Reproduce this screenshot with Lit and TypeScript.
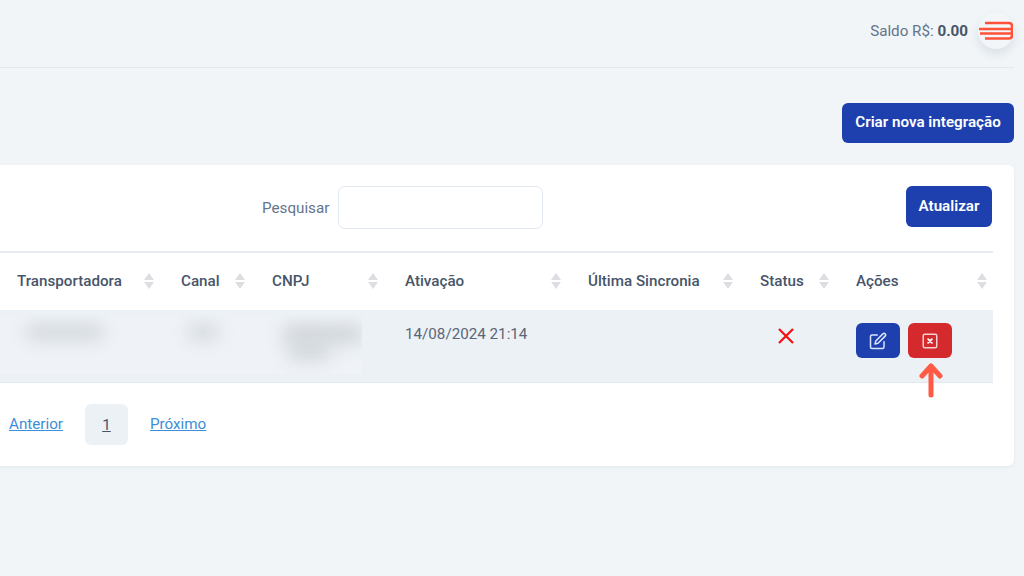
import { LitElement, html, css } from "lit";
import { customElement } from "lit/decorators.js";

const columns = [
  { label: "Transportadora", width: 165 },
  { label: "Canal", width: 91 },
  { label: "CNPJ", width: 133 },
  { label: "Ativação", width: 183 },
  { label: "Última Sincronia", width: 172 },
  { label: "Status", width: 96 },
  { label: "Ações", width: 153 },
];

const sortIcon = html`<svg class="sort" width="10" height="16" viewBox="0 0 10 16">
  <path d="M5 0 L10 7 H0 Z M0 9 H10 L5 16 Z" fill="#dcdee1"></path>
</svg>`;

@customElement("app-root")
export class AppRoot extends LitElement {
  static styles = css`
    :host {
      display: block;
      width: 1024px;
      height: 576px;
      overflow: hidden;
      background: #f1f5f8;
      font-family: Roboto, "Liberation Sans", sans-serif;
      color: #475569;
      font-size: 15.2px;
    }
    .topbar {
      height: 67px;
      margin-right: 10px;
      border-bottom: 1px solid #e2e8f0;
      display: flex;
      align-items: flex-start;
      justify-content: flex-end;
      gap: 10px;
    }
    .saldo {
      margin-top: 22px;
      line-height: 18px;
      color: #64748b;
    }
    .saldo b {
      color: #475569;
      font-weight: 700;
    }
    .menu {
      position: relative;
      width: 36px;
      height: 36px;
      margin-top: 13px;
      border-radius: 50%;
      background: #f3f6f9;
      box-shadow: 0 5px 10px rgba(100, 116, 139, 0.16);
    }
    .burger {
      position: absolute;
      left: -1px;
      top: 8px;
    }
    .actions-row {
      display: flex;
      justify-content: flex-end;
      padding: 35px 10px 22px 0;
    }
    .btn {
      background: #1e40af;
      color: #fff;
      font: 600 15.2px/1 Roboto, sans-serif;
      border-radius: 6px;
      display: flex;
      align-items: center;
      justify-content: center;
      box-sizing: border-box;
    }
    .create {
      width: 172px;
      height: 40px;
    }
    .card {
      height: 301px;
      margin-right: 10px;
      background: #fff;
      border-radius: 0 6px 6px 0;
      box-shadow: 0 1px 3px rgba(100, 116, 139, 0.1);
      box-sizing: border-box;
      padding: 21px 21px 0 0;
    }
    .tools {
      display: flex;
      align-items: center;
      height: 43px;
    }
    .search-label {
      margin-left: 262px;
      margin-right: 9px;
      color: #64748b;
    }
    .search {
      width: 205px;
      height: 43px;
      box-sizing: border-box;
      border: 1px solid #e2e8f0;
      border-radius: 7px;
      background: #fff;
    }
    .update {
      margin-left: auto;
      margin-right: 1px;
      margin-bottom: 2px;
      width: 86px;
      height: 41px;
    }
    .table {
      margin-top: 22px;
      border-top: 2px solid #e8ecf0;
    }
    .row {
      display: flex;
    }
    .th {
      flex: none;
      height: 57px;
      box-sizing: border-box;
      padding: 0 11px 1px 16px;
      display: flex;
      align-items: center;
      justify-content: space-between;
      font-weight: 500;
      color: #475569;
    }
    .th.first {
      padding-left: 17px;
    }
    .th.last {
      padding-right: 6px;
    }
    .body {
      height: 72px;
      background: #ecf1f6;
      border-bottom: 1px solid #e2e8f0;
      box-sizing: content-box;
      position: relative;
    }
    .td {
      flex: none;
      box-sizing: border-box;
      padding: 15px 16px 0;
      line-height: 18px;
      color: #5b6678;
    }
    .censor {
      position: absolute;
      left: 0;
      top: 5px;
      width: 362px;
      height: 59px;
      overflow: hidden;
      background: #eff3f7;
    }
    .smudge {
      position: absolute;
      background: #ced3d7;
      filter: blur(9px);
      border-radius: 6px;
    }
    .status {
      flex: none;
      box-sizing: border-box;
      padding: 18px 0 0 34px;
    }
    .row-btns {
      display: flex;
      gap: 8px;
      padding-top: 13px;
      position: relative;
    }
    .icon-btn {
      width: 44px;
      height: 35px;
      border-radius: 6px;
      display: flex;
      align-items: center;
      justify-content: center;
      background: #1e40af;
    }
    .icon-btn.red {
      background: #d42a2e;
    }
    .arrow {
      position: absolute;
      left: 79px;
      top: 52px;
    }
    .pager {
      display: flex;
      align-items: center;
      height: 41px;
      margin-top: 21px;
      padding-left: 9px;
    }
    .pager a {
      color: #3b8ed8;
      text-decoration: underline;
      margin-bottom: 2px;
    }
    .page {
      width: 43px;
      height: 41px;
      margin: 0 22px;
      background: #ecf1f6;
      border-radius: 6px;
      display: flex;
      align-items: center;
      justify-content: center;
      text-decoration: underline;
      color: #475569;
    }
  `;

  render() {
    return html`
      <div class="topbar">
        <div class="saldo">Saldo R$: <b>0.00</b></div>
        <div class="menu">
          <svg class="burger" width="36" height="20" viewBox="0 0 36 20">
            <path
              d="M8 2H32Q35 2 35 5V14.5Q35 17.5 32 17.5H8M2 8H35M3 12.5H35"
              fill="none"
              stroke="#ff5238"
              stroke-width="2.6"
            ></path>
          </svg>
        </div>
      </div>
      <div class="actions-row"><div class="btn create">Criar nova integração</div></div>
      <div class="card">
        <div class="tools">
          <span class="search-label">Pesquisar</span>
          <input class="search" />
          <div class="btn update">Atualizar</div>
        </div>
        <div class="table">
          <div class="row">
            ${columns.map(
              (c, i) => html`<div
                class="th ${i === 0 ? "first" : ""} ${i === 6 ? "last" : ""}"
                style="width:${c.width}px"
              >
                <span>${c.label}</span>${sortIcon}
              </div>`
            )}
          </div>
          <div class="row body">
            <div class="censor">
              <div class="smudge" style="left:26px;top:10px;width:78px;height:14px"></div>
              <div class="smudge" style="left:188px;top:10px;width:30px;height:14px"></div>
              <div class="smudge" style="left:283px;top:10px;width:80px;height:18px"></div>
              <div class="smudge" style="left:288px;top:28px;width:42px;height:16px"></div>
            </div>
            <div class="td" style="width:389px"></div>
            <div class="td" style="width:183px;position:relative">14/08/2024 21:14</div>
            <div class="td" style="width:172px"></div>
            <div class="status" style="width:96px">
              <svg width="16" height="16" viewBox="0 0 16 16">
                <path d="M1 1L15 15M15 1L1 15" stroke="#f50f0f" stroke-width="2.2" fill="none"></path>
              </svg>
            </div>
            <div class="td row-btns" style="width:153px">
              <div class="icon-btn">
                <svg width="18" height="18" viewBox="0 0 24 24" fill="none" stroke="#dbe4ff" stroke-width="2" stroke-linecap="round" stroke-linejoin="round">
                  <path d="M11 4H4a2 2 0 0 0-2 2v14a2 2 0 0 0 2 2h14a2 2 0 0 0 2-2v-7"></path>
                  <path d="M18.5 2.5a2.12 2.12 0 0 1 3 3L12 15l-4 1 1-4 9.5-9.5z"></path>
                </svg>
              </div>
              <div class="icon-btn red">
                <svg width="18" height="18" viewBox="0 0 24 24" fill="none" stroke="#f5d0d0" stroke-width="2" stroke-linecap="round" stroke-linejoin="round">
                  <rect x="3" y="3" width="18" height="18" rx="2"></rect>
                  <path d="M9.5 9.5l5 5M14.5 9.5l-5 5" stroke="#fff" stroke-width="2.4"></path>
                </svg>
              </div>
              <svg class="arrow" width="24" height="38" viewBox="0 0 24 38" fill="none" stroke="#ff5a45" stroke-width="5" stroke-linecap="round" stroke-linejoin="round">
                <path d="M12 33V4M3 14L12 4L21 14"></path>
              </svg>
            </div>
          </div>
        </div>
        <div class="pager">
          <a href="#">Anterior</a>
          <div class="page">1</div>
          <a href="#">Próximo</a>
        </div>
      </div>
    `;
  }
}
